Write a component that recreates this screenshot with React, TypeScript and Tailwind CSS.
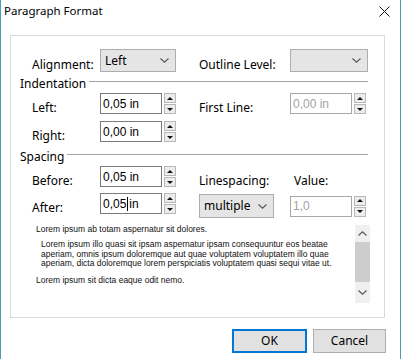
import React from 'react';

const Chevron = ({ up = false }: { up?: boolean }) => (
    <svg width="9" height="5" viewBox="0 0 9 5" className="block">
        <path d={up ? 'M0.5 4.5 L4.5 0.8 L8.5 4.5' : 'M0.5 0.5 L4.5 4.2 L8.5 0.5'} fill="none" stroke="#555" strokeWidth="1.1" />
    </svg>
);

const Spin = () => (
    <div className="flex flex-col gap-[1px] w-[12px] h-[21px] ml-[2px]">
        <div className="flex-1 flex items-center justify-center border border-[#b8b8b8] bg-[#ececec]">
            <svg width="6" height="3" viewBox="0 0 6 3"><path d="M0 3 L3 0 L6 3 Z" fill="#111" /></svg>
        </div>
        <div className="flex-1 flex items-center justify-center border border-[#b8b8b8] bg-[#ececec]">
            <svg width="6" height="3" viewBox="0 0 6 3"><path d="M0 0 L6 0 L3 3 Z" fill="#111" /></svg>
        </div>
    </div>
);

const NumBox = ({ value, disabled = false, caret = false }: { value: string; disabled?: boolean; caret?: boolean }) => (
    <div className="flex items-center">
        <div
            className={`w-[62px] h-[21px] border flex items-center pl-[2px] font-['Liberation_Sans',Arial,sans-serif] text-[12px] ${
                disabled ? 'border-[#a8a8a8] text-[#a3a3a3]' : 'border-[#7a7a7a] text-black'
            }`}
        >
            {caret ? (
                <>
                    0,05<span className="inline-block w-[1px] h-[14px] bg-black mx-[1px]" />in
                </>
            ) : (
                value
            )}
        </div>
        <Spin />
    </div>
);

const Dropdown = ({ value, width }: { value: string; width: string }) => (
    <div className={`${width} h-[23px] bg-[#e5e5e5] border border-[#adadad] flex items-center justify-between pl-[4px] pr-[6px]`}>
        <span>{value}</span>
        <Chevron />
    </div>
);

const Header = ({ text }: { text: string }) => (
    <div className="flex h-[16px] items-center">
        <span className="leading-none">{text}</span>
        <div className="flex-1 h-[1px] bg-[#a0a0a0] ml-[3px] mr-[16px] self-start mt-[5px]" />
    </div>
);

const Label = ({ text, w }: { text: string; w: string }) => (
    <div className={`${w} pt-[4px] leading-none self-stretch flex items-center`}>
        <span className="translate-y-[2px]">{text}</span>
    </div>
);

export default function App() {
    return (
        <div className="w-[404px] h-[359px] bg-white text-[12px] text-black font-['Noto_Sans',sans-serif] overflow-hidden">
            <div className="w-[401px] h-full border-x border-[#4a9eb0] flex flex-col">
                <div className="h-[22px] flex items-center justify-between pl-[3px] pr-[10px]">
                    <span className="text-[11.5px]">Paragraph Format</span>
                    <svg width="11" height="11" viewBox="0 0 11 11">
                        <path d="M0.5 0.5 L10.5 10.5 M10.5 0.5 L0.5 10.5" stroke="#111" strokeWidth="1" />
                    </svg>
                </div>

                <div className="ml-[9px] mt-[13px] w-[375px] h-[283px] border border-[#dadada] pl-[9px] flex flex-col">
                    <div className="ml-[12px] mt-[13px] h-[23px] flex">
                        <Label text="Alignment:" w="w-[68px]" />
                        <Dropdown value="Left" width="w-[76px]" />
                        <div className="w-[23px]" />
                        <Label text="Outline Level:" w="w-[91px]" />
                        <Dropdown value="" width="w-[78px]" />
                    </div>

                    <div className="mt-[4px]">
                        <Header text="Indentation" />
                    </div>
                    <div className="ml-[12px] mt-[1px] h-[21px] flex">
                        <Label text="Left:" w="w-[68px]" />
                        <NumBox value="0,05 in" />
                        <div className="w-[23px]" />
                        <Label text="First Line:" w="w-[91px]" />
                        <NumBox value="0,00 in" disabled />
                    </div>
                    <div className="ml-[12px] mt-[7px] h-[21px] flex">
                        <Label text="Right:" w="w-[68px]" />
                        <NumBox value="0,00 in" />
                    </div>

                    <div className="mt-[7px]">
                        <Header text="Spacing" />
                    </div>
                    <div className="ml-[12px] mt-[1px] flex">
                        <div className="flex flex-col">
                            <div className="h-[21px] flex">
                                <Label text="Before:" w="w-[68px]" />
                                <NumBox value="0,05 in" />
                            </div>
                            <div className="h-[21px] mt-[6px] flex">
                                <Label text="After:" w="w-[68px]" />
                                <NumBox value="0,05 in" caret />
                            </div>
                        </div>
                        <div className="w-[23px]" />
                        <div className="flex flex-col">
                            <div className="h-[21px] flex">
                                <Label text="Linespacing:" w="w-[95px]" />
                                <Label text="Value:" w="w-[60px]" />
                            </div>
                            <div className="mt-[7px] flex">
                                <Dropdown value="multiple" width="w-[75px] !h-[24px]" />
                                <div className="w-[16px]" />
                                <NumBox value="1,0" disabled />
                            </div>
                        </div>
                    </div>

                    <div className="ml-[12px] mt-[4px] h-[82px] flex">
                        <div className="w-[323px] pt-[2px] pl-[4px] font-['Liberation_Sans',Arial,sans-serif] text-[8.5px] text-[#111] whitespace-nowrap">
                            <p className="leading-[10px]">Lorem ipsum ab totam aspernatur sit dolores.</p>
                            <p className="leading-[9.5px] mt-[6px] pl-[5px]">
                                Lorem ipsum illo quasi sit ipsam aspernatur ipsam consequuntur eos beatae
                                <br />
                                aperiam, omnis ipsum doloremque aut quae voluptatem voluptatem illo quae
                                <br />
                                aperiam, dicta doloremque lorem perspiciatis voluptatem quasi sequi vitae ut.
                            </p>
                            <p className="leading-[10px] mt-[6px]">Lorem ipsum sit dicta eaque odit nemo.</p>
                        </div>
                        <div className="w-[15px] mt-[3px] h-[78px] bg-[#f0f0f0] flex flex-col items-center">
                            <div className="h-[17px] flex items-center justify-center">
                                <Chevron up />
                            </div>
                            <div className="w-full h-[40px] bg-[#cdcdcd]" />
                            <div className="flex-1 flex items-center justify-center">
                                <Chevron />
                            </div>
                        </div>
                    </div>
                </div>

                <div className="mt-[11px] flex justify-end gap-[6px] pr-[14px]">
                    <button className="w-[75px] h-[24px] border-2 border-[#0078d7] bg-[#e1e1e1] flex items-center justify-center">
                        OK
                    </button>
                    <button className="w-[73px] h-[24px] border border-[#adadad] bg-[#e1e1e1] flex items-center justify-center">
                        Cancel
                    </button>
                </div>
            </div>
        </div>
    );
}
